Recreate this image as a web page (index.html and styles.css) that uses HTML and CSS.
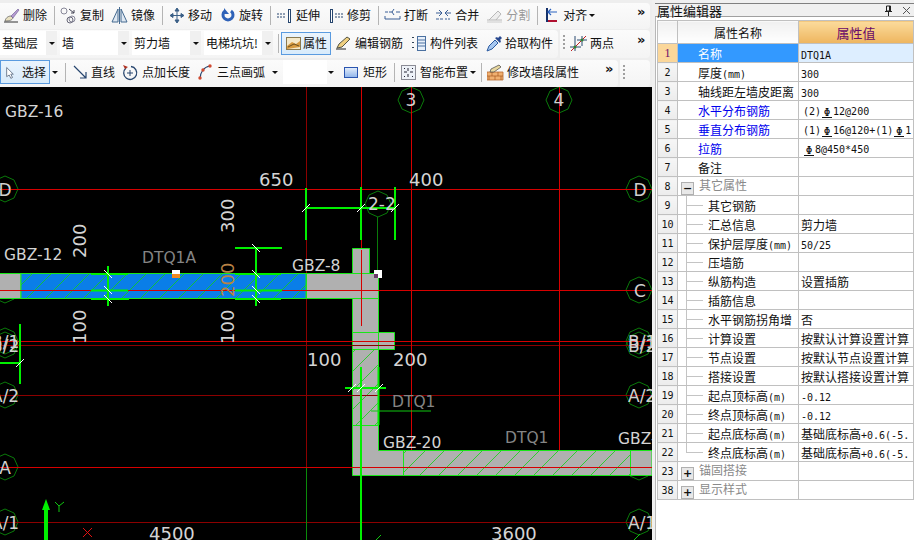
FILE: index.html
```html
<!DOCTYPE html>
<html lang="zh">
<head>
<meta charset="utf-8">
<title>属性编辑器</title>
<link rel="stylesheet" href="styles.css">
</head>
<body>
<div class="app">
  <div class="main">
    <div class="toolbars">
      <div class="bar row1">
        <span class="tool"><svg class="ic" viewBox="0 0 17 17"><path d="M1 15h14" stroke="#333" fill="none"/><path d="M2 14c1-4 4-5 6-5l2 2c-1 2-3 3-8 3z" fill="#e8e0c0" stroke="#555" stroke-width=".7"/><path d="M8 9l7-7 1 1-6 8z" fill="#b59ad0" stroke="#6a5a90" stroke-width=".6"/></svg><span>删除</span></span>
        <i class="sep"></i>
        <span class="tool"><svg class="ic" viewBox="0 0 17 17"><circle cx="4" cy="4" r="3" fill="none" stroke="#889"/><circle cx="10" cy="13" r="3" fill="none" stroke="#667"/><circle cx="12" cy="12" r="3" fill="none" stroke="#889"/><path d="M9 2l5 4M14 3v3h-3" fill="none" stroke="#445"/></svg><span>复制</span></span>
        <span class="tool"><svg class="ic" viewBox="0 0 17 17"><path d="M7 2L1 15h6zM10 2l6 13h-6z" fill="#dfe8f2" stroke="#456a90"/><path d="M8.500 0v17" stroke="#456a90"/></svg><span>镜像</span></span>
        <i class="sep"></i>
        <span class="tool"><svg class="ic" viewBox="0 0 17 17"><path d="M9 2v13M3 8.500h12M9 1l-2 3h4zM9 16l-2-3h4zM2 8.500l3-2v4zM16 8.500l-3-2v4z" stroke="#3a5f86" fill="#3a5f86"/></svg><span>移动</span></span>
        <span class="tool"><svg class="ic" viewBox="0 0 17 17"><path d="M6 4a5 5 0 1 0 6 0" fill="none" stroke="#2f62b8" stroke-width="3"/><path d="M5 1v6h5z" fill="#2f62b8"/></svg><span>旋转</span></span>
        <i class="sep"></i>
        <span class="tool"><svg class="ic" viewBox="0 0 17 17"><path d="M1 7h2m1 0h2m1 0h2M1 10h2m1 0h2m1 0h2" stroke="#26456e"/><rect x="12.500" y="2.500" width="2" height="13" fill="#fff" stroke="#26456e"/></svg><span>延伸</span></span>
        <span class="tool"><svg class="ic" viewBox="0 0 17 17"><rect x="3.500" y="2.500" width="2" height="13" fill="#fff" stroke="#26456e"/><path d="M8 7h2m1 0h2m1 0h2M8 10h2m1 0h2m1 0h2" stroke="#26456e"/></svg><span>修剪</span></span>
        <i class="sep"></i>
        <span class="tool"><svg class="ic" viewBox="0 0 17 17"><path d="M1 5h3m1 0h3m4 0h4M1 12h15" stroke="#3a5f96" fill="none"/><path d="M10 2l-2 3 2 3M1 9v3M16 9v3" stroke="#3a5f96" fill="none"/></svg><span>打断</span></span>
        <span class="tool"><svg class="ic" viewBox="0 0 17 17"><path d="M1 6h6m3 0h6M1 12h3m1 0h3m2 0h2m1 0h2" stroke="#3a5f96" fill="none"/><path d="M4 3l3 3-3 3M13 3l-3 3 3 3" stroke="#3a5f96" fill="none"/></svg><span>合并</span></span>
        <span class="tool off"><svg class="ic" viewBox="0 0 17 17"><path d="M1 13h15M3 13l9-9 3 3-5 6" fill="#eee" stroke="#b8b8b8"/><path d="M1 15h15" stroke="#ccc"/></svg><span>分割</span></span>
        <i class="sep"></i>
        <span class="tool"><svg class="ic" viewBox="0 0 17 17"><path d="M4 1v14" stroke="#14306a" stroke-width="2"/><path d="M5 5h9M8 2L5 5l3 3" stroke="#2a62c0" fill="none" stroke-width="1.200"/><path d="M5 14h9" stroke="#b01030" stroke-width="2"/></svg><span>对齐</span></span>
        <i class="caret near"></i>
        <b class="more">»</b>
      </div>
      <div class="row2">
        <div class="bar first">
          <span class="combo short"><span class="combo-text">基础层</span><i class="combo-btn"><i class="caret"></i></i></span>
          <span class="combo"><span class="combo-text">墙</span><i class="combo-btn"><i class="caret"></i></i></span>
          <span class="combo"><span class="combo-text">剪力墙</span><i class="combo-btn"><i class="caret"></i></i></span>
          <span class="combo"><span class="combo-text">电梯坑坑!</span><i class="combo-btn"><i class="caret"></i></i></span>
          <i class="sep tight"></i>
          <span class="tool active attr"><svg class="ic" viewBox="0 0 17 17"><rect x="1.500" y="2.500" width="14" height="12" fill="#f4e8c8" stroke="#8a7a50"/><path d="M2 11l5-4 4 2 4-3v6l-13 2z" fill="#d69a40"/><path d="M3 12l6-3 5 2" stroke="#6a5020" fill="none"/></svg><span>属性</span></span>
          <span class="tool"><svg class="ic" viewBox="0 0 17 17"><path d="M0 14h10" stroke="#222"/><path d="M1 13l2-4 8-7 3 2-8 8z" fill="#f0d080" stroke="#554"/></svg><span>编辑钢筋</span></span>
          <span class="tool"><svg class="ic" viewBox="0 0 17 17"><path d="M2 2v1M2 7v1M2 12v1" stroke="#345" stroke-width="2"/><rect x="6.500" y="1.500" width="8" height="14" fill="#e8f0fa" stroke="#4a70a0"/><path d="M7 5h7M7 8h7M7 11h7" stroke="#4a70a0"/></svg><span>构件列表</span></span>
          <span class="tool"><svg class="ic" viewBox="0 0 17 17"><path d="M1 16l2-5 6-6 3 3-6 6z" fill="#a8c8f0" stroke="#2a5aa0"/><path d="M9 3l5 5 1-2-1-1 2-2-2-2-2 2-1-1z" fill="#2a4a90"/></svg><span>拾取构件</span></span>
        </div>
        <div class="bar second">
          <i class="grip"></i>
          <span class="tool"><svg class="ic" viewBox="0 0 17 17"><path d="M1 16L16 1" stroke="#c02020"/><path d="M5 1v15M0 12h11M12 1v10M7 5h10" stroke="#2a4a70"/><circle cx="5" cy="12" r="1.500" fill="#308030"/><circle cx="12" cy="5" r="1.500" fill="#308030"/></svg><span>两点</span></span>
          <b class="more">»</b>
        </div>
      </div>
      <div class="row3">
        <div class="bar first">
          <span class="tool active select"><svg class="cursor" viewBox="0 0 12 14"><path d="M2 1v11l3-2 2 4 2-1-2-4h3z" fill="#fff" stroke="#5a6a80"/></svg><span>选择</span></span>
          <i class="caret near"></i>
          <i class="sep"></i>
          <span class="tool"><svg class="ic" viewBox="0 0 17 17"><path d="M3 2l12 12M15 8v6H9" fill="none" stroke="#26456e" stroke-width="1.200"/></svg><span>直线</span></span>
          <span class="tool"><svg class="ic" viewBox="0 0 17 17"><path d="M4 4a6.500 6.500 0 1 0 5-1.500" fill="none" stroke="#26456e" stroke-width="1.300"/><path d="M1 1l2 4 3-2" fill="#b03020"/><path d="M8 6v6M5 9h6" stroke="#26456e"/></svg><span>点加长度</span></span>
          <span class="tool"><svg class="ic" viewBox="0 0 17 17"><path d="M3 15C3 8 7 3 13 2" fill="none" stroke="#26456e" stroke-width="1.200"/><circle cx="3" cy="14" r="1.700" fill="#d04a30"/><circle cx="6" cy="6" r="1.700" fill="#d04a30"/><circle cx="13" cy="2" r="1.700" fill="#d04a30"/></svg><span>三点画弧</span></span>
          <i class="caret"></i>
          <span class="blank"></span>
          <i class="caret pull"></i>
          <span class="tool rect"><svg class="ic" viewBox="0 0 17 17"><defs><linearGradient id="rectfill" x1="0" y1="0" x2="0" y2="1"><stop offset="0" stop-color="#e6effb"/><stop offset="1" stop-color="#8fb4ea"/></linearGradient></defs><rect x="3.500" y="3.500" width="13" height="10" fill="url(#rectfill)" stroke="#2a55b0"/></svg><span>矩形</span></span>
          <i class="sep"></i>
          <span class="tool"><svg class="ic" viewBox="0 0 17 17"><rect x="1.500" y="1.500" width="14" height="14" fill="#eef2f8" stroke="#223" stroke-dasharray="1 1"/><path d="M8 4v3M8 10v3M4 8h3M10 8h3" stroke="#223"/><path d="M4 4h1v1H4zM12 4h1v1h-1zM4 12h1v1H4zM12 12h1v1h-1z" fill="#223"/></svg><span>智能布置</span></span>
          <i class="caret near"></i>
          <i class="sep pull"></i>
          <span class="tool"><svg class="ic" viewBox="0 0 17 17"><path d="M0 8h16v8H0z" fill="#f0b070" stroke="#b86a30" stroke-width=".8"/><path d="M0 12h16M5 8v4M11 8v4M2 12v4M8 12v4M14 12v4" stroke="#a85a20" stroke-width=".7"/><path d="M3 8l1-3 8-4 2 2-7 5z" fill="#e8d8a0" stroke="#444" stroke-width=".7"/></svg><span>修改墙段属性</span></span>
          <b class="more">»</b>
        </div>
        <div class="bar second"><i class="grip"></i></div>
      </div>
    </div>

    <svg class="canvas" viewBox="0 87 652 453" preserveAspectRatio="none">
      <defs>
        <pattern id="hatch" patternUnits="userSpaceOnUse" x="2" y="0" width="19" height="19">
          <path class="hatch" d="M-1 20L20 -1"/>
        </pattern>
      </defs>
      <rect class="bg" x="0" y="87" width="652" height="453"/>

      <g class="ring">
        <path d="M5 176l9 4 4 9-4 9-9 4-9-4-4-9 4-9z"/>
        <path d="M5 277l9 4 4 9-4 9-9 4-9-4-4-9 4-9z"/>
        <path d="M5 328l9 4 4 9-4 9-9 4-9-4-4-9 4-9z"/>
        <path d="M5 332l9 4 4 9-4 9-9 4-9-4-4-9 4-9z"/>
        <path d="M5 382l9 4 4 9-4 9-9 4-9-4-4-9 4-9z"/>
        <path d="M5 454l9 4 4 9-4 9-9 4-9-4-4-9 4-9z"/>
        <path d="M5 509l9 4 4 9-4 9-9 4-9-4-4-9 4-9z"/>
        <path d="M411 87l9 4 4 9-4 9-9 4-9-4-4-9 4-9z"/>
        <path d="M559 87l9 4 4 9-4 9-9 4-9-4-4-9 4-9z"/>
        <path d="M378 191l9 4 4 9-4 9-9 4-9-4-4-9 4-9z"/>
        <path d="M639 176l9 4 4 9-4 9-9 4-9-4-4-9 4-9z"/>
        <path d="M639 277l9 4 4 9-4 9-9 4-9-4-4-9 4-9z"/>
        <path d="M639 328l9 4 4 9-4 9-9 4-9-4-4-9 4-9z"/>
        <path d="M639 332l9 4 4 9-4 9-9 4-9-4-4-9 4-9z"/>
        <path d="M639 382l9 4 4 9-4 9-9 4-9-4-4-9 4-9z"/>
        <path d="M639 454l9 4 4 9-4 9-9 4-9-4-4-9 4-9z"/>
        <path d="M639 509l9 4 4 9-4 9-9 4-9-4-4-9 4-9z"/>
        <path d="M377.500 217V273"/>
      </g>

      <g class="grid-dark">
        <path d="M0 345.500H652M0 395.500H652M0 522.500H652"/>
        <path d="M306.500 87V467"/>
      </g>
      <g class="grid">
        <path d="M0 189.500H652M361.500 87V250M411.500 87V450M559.500 87V466"/>
      </g>
      <path class="grid-green" d="M306.500 467V540"/>

      <g class="wall">
        <path class="w-line" d="M0 273.500H21V298.500H0"/>
        <rect class="w-blue" x="21" y="273.500" width="285" height="25"/>
        <rect class="w-hatch" x="21" y="273.500" width="285" height="25"/>
        <path class="w-gray" d="M352.500 248.500H369.500V273.500H378.500V332.500H394.500V349.500H378.500V450.500H652V475.500H352.500V298.500H306.500V273.500H352.500Z"/>
        <rect class="w-hatch" x="352.500" y="349.500" width="26" height="76"/>
        <rect class="w-hatch" x="403.500" y="450.500" width="227" height="25"/>
        <path class="w-edge" d="M352.500 273.500H378.500M352.500 298.500H378.500M352.500 332.500H378.500M378.500 332.500V349.500M352.500 349.500H378.500M352.500 425.500H378.500M403.500 450.500V475.500M630.500 450.500V475.500"/>
      </g>

      <g class="grid">
        <path d="M0 290.500H652M361.500 250V326M0 341.500H652M0 467.500H652"/>
      </g>
      <path class="grid-dark" d="M352 345.500H395M352 395.500H379"/>

      <g class="dim">
        <path d="M108 266V306M91 274H128M91 290.500H128M91 299H129"/>
        <path d="M256 248V306M235 248H282M235 274H281M235 290.500H282M235 299H281"/>
        <path d="M306 188V240M361 187V240M395 187V240M306 208H395"/>
        <path d="M20 324V384M0 363H20"/>
        <path d="M361 367V540M378.500 367V425M345 388H386"/>
      </g>
      <path class="dim-thin" d="M371 411H431"/>
      <path class="axis-y" d="M46 540V508"/>
      <path class="axis-head" d="M46 499l4 11h-8z"/>
      <path class="axis-label" d="M55 502l4 4 5-4M59 506v6"/>
      <path class="axis-x" d="M83 528l9 9M92 528l-9 9"/>
      <path class="dim-thin" d="M634 540l6-6M376 540l5-5"/>

      <g class="tick">
        <path d="M104 270l8 8M104 286l8 8M104 295l8 8M252 244l8 8M252 270l8 8M252 286l8 8M252 295l8 8"/>
        <path d="M302 212l8-8M357 212l8-8M391 212l8-8M16 367l8-8M348 392l8-8M357 392l8-8M375 392l8-8"/>
      </g>

      <rect class="grip-w" x="172" y="270" width="8" height="4"/>
      <rect class="grip-o" x="172" y="274" width="8" height="4"/>
      <rect class="grip-w" x="374" y="270" width="8" height="8"/>
      <rect class="grip-p" x="374" y="274" width="4" height="4"/>

      <g class="label">
        <text x="5" y="117" class="sm">GBZ-16</text>
        <text x="4" y="260" class="sm">GBZ-12</text>
        <text x="292" y="271" class="sm">GBZ-8</text>
        <text x="383" y="448" class="sm">GBZ-20</text>
        <text x="618" y="444" class="sm">GBZ-22</text>
        <text x="259" y="186">650</text>
        <text x="409" y="186">400</text>
        <text x="307" y="366">100</text>
        <text x="393" y="366">200</text>
        <text x="149" y="540">4500</text>
        <text x="491" y="540">3600</text>
        <text x="86" y="258" transform="rotate(-90 86 258)">200</text>
        <text x="234" y="233" transform="rotate(-90 234 233)">300</text>
        <text x="86" y="344" transform="rotate(-90 86 344)">100</text>
        <text x="234" y="344" transform="rotate(-90 234 344)">100</text>
        <text x="234" y="297" transform="rotate(-90 234 297)" class="orange">200</text>
      </g>
      <g class="label dimmed">
        <text x="142" y="263">DTQ1A</text>
        <text x="392" y="407">DTQ1</text>
        <text x="505" y="443">DTQ1</text>
      </g>
      <g class="label axis">
        <text x="368" y="210">2-2</text>
        <text x="411" y="106" class="mid">3</text>
        <text x="559" y="106" class="mid">4</text>
        <text x="5" y="196" class="mid">D</text>
        <text x="640" y="196" class="mid">D</text>
        <text x="640" y="297" class="mid">C</text>
        <text x="5" y="474" class="mid">A</text>
        <text x="-9" y="348">B/1</text>
        <text x="-9" y="352">B/2</text>
        <text x="-9" y="402">A/2</text>
        <text x="-9" y="529">A/1</text>
        <text x="628" y="348">B/1</text>
        <text x="628" y="352">B/2</text>
        <text x="628" y="402">A/2</text>
        <text x="628" y="529">A/1</text>
      </g>
    </svg>
  </div>

  <aside class="panel">
    <div class="title"><span class="title-text">属性编辑器</span><span class="title-btns"><svg class="pin" viewBox="0 0 9 11"><path d="M2.500 1h4v5h-4zM1 6.500h7M4.500 7v4M5.500 1v5" stroke="#222" fill="none"/></svg><svg class="close" viewBox="0 0 9 9"><path d="M1 1l7 7M8 1l-7 7" stroke="#555" fill="none"/></svg></span></div>
    <table class="props">
      <colgroup><col class="c-num"><col class="c-name"><col class="c-val"></colgroup>
      <thead>
        <tr><th class="corner"></th><th class="h-name">属性名称</th><th class="h-val">属性值</th></tr>
      </thead>
      <tbody>
        <tr class="cur"><td class="num">1</td><td class="name">名称</td><td class="val"><span class="lat">DTQ1A</span></td></tr>
        <tr><td class="num">2</td><td class="name">厚度<span class="lat">(mm)</span></td><td class="val"><span class="lat">300</span></td></tr>
        <tr><td class="num">3</td><td class="name">轴线距左墙皮距离</td><td class="val"><span class="lat">300</span></td></tr>
        <tr><td class="num">4</td><td class="name link">水平分布钢筋</td><td class="val ind"><span class="lat">(2)<span class="bar-sym">Φ</span>12@200</span></td></tr>
        <tr><td class="num">5</td><td class="name link">垂直分布钢筋</td><td class="val ind"><span class="lat">(1)<span class="bar-sym">Φ</span>16@120+(1)<span class="bar-sym">Φ</span>1</span></td></tr>
        <tr><td class="num">6</td><td class="name link">拉筋</td><td class="val ind"><span class="lat"><span class="bar-sym">Φ</span>8@450*450</span></td></tr>
        <tr><td class="num">7</td><td class="name">备注</td><td class="val"></td></tr>
        <tr class="group"><td class="num">8</td><td class="name"><i class="box">−</i>其它属性</td><td class="val"></td></tr>
        <tr class="child"><td class="num">9</td><td class="name">其它钢筋</td><td class="val"></td></tr>
        <tr class="child"><td class="num">10</td><td class="name">汇总信息</td><td class="val">剪力墙</td></tr>
        <tr class="child"><td class="num">11</td><td class="name">保护层厚度<span class="lat">(mm)</span></td><td class="val"><span class="lat">50/25</span></td></tr>
        <tr class="child"><td class="num">12</td><td class="name">压墙筋</td><td class="val"></td></tr>
        <tr class="child"><td class="num">13</td><td class="name">纵筋构造</td><td class="val">设置插筋</td></tr>
        <tr class="child"><td class="num">14</td><td class="name">插筋信息</td><td class="val"></td></tr>
        <tr class="child"><td class="num">15</td><td class="name">水平钢筋拐角增</td><td class="val">否</td></tr>
        <tr class="child"><td class="num">16</td><td class="name">计算设置</td><td class="val">按默认计算设置计算</td></tr>
        <tr class="child"><td class="num">17</td><td class="name">节点设置</td><td class="val">按默认节点设置计算</td></tr>
        <tr class="child"><td class="num">18</td><td class="name">搭接设置</td><td class="val">按默认搭接设置计算</td></tr>
        <tr class="child"><td class="num">19</td><td class="name">起点顶标高<span class="lat">(m)</span></td><td class="val"><span class="lat">-0.12</span></td></tr>
        <tr class="child"><td class="num">20</td><td class="name">终点顶标高<span class="lat">(m)</span></td><td class="val"><span class="lat">-0.12</span></td></tr>
        <tr class="child"><td class="num">21</td><td class="name">起点底标高<span class="lat">(m)</span></td><td class="val">基础底标高<span class="lat">+0.6(-5.</span></td></tr>
        <tr class="child last"><td class="num">22</td><td class="name">终点底标高<span class="lat">(m)</span></td><td class="val">基础底标高<span class="lat">+0.6(-5.</span></td></tr>
        <tr class="group"><td class="num">23</td><td class="name"><i class="box">+</i>锚固搭接</td><td class="val"></td></tr>
        <tr class="group"><td class="num">38</td><td class="name"><i class="box">+</i>显示样式</td><td class="val"></td></tr>
      </tbody>
    </table>
  </aside>
</div>
</body>
</html>
```

FILE: styles.css
```css
* { box-sizing: border-box; }
html, body { margin: 0; padding: 0; }
body {
  width: 914px;
  height: 540px;
  overflow: hidden;
  background: #f0f0f0;
  font-family: "Noto Sans CJK SC", "Liberation Sans", sans-serif;
  font-size: 12px;
  color: #111;
}
.app { display: flex; width: 914px; height: 540px; }
.main { width: 652px; display: flex; flex-direction: column; }

/* toolbars */
.toolbars {
  height: 87px;
  padding: 3px 2px 0 0;
  display: flex;
  flex-direction: column;
  gap: 1px;
  background: #eeeeee;
}
.bar {
  display: flex;
  align-items: center;
  gap: 7px;
  background: linear-gradient(#fbfbfb, #f4f4f4);
  border-radius: 0 4px 4px 0;
  padding-bottom: 2px;
}
.row1 { height: 26px; padding-left: 3px; }
.row2, .row3 { display: flex; gap: 2px; }
.row2 { height: 28px; }
.row3 { height: 27px; margin-top: 1px; }
.first { flex: 1; min-width: 0; }
.row2 .first { gap: 3px; padding-right: 5px; }
.row3 .first { gap: 7px; padding-bottom: 3px; }
.row2 .second { width: 90px; gap: 4px; padding-left: 3px; }
.row3 .second { width: 30px; padding-left: 3px; }

.tool { display: flex; align-items: center; gap: 3px; white-space: nowrap; line-height: 16px; }
.tool.off { color: #9a9a9a; }
.ic { width: 17px; height: 17px; flex: none; display: block; }
.sep { width: 1px; height: 19px; background: #b4b4b4; margin-right: -2px; flex: none; }
.sep.tight { margin: 0 0 0 2px; }
.sep.pull { margin-left: -2px; }
.caret {
  width: 0;
  height: 0;
  flex: none;
  border-left: 3px solid transparent;
  border-right: 3px solid transparent;
  border-top: 3px solid #111;
}
.caret.near { margin-left: -5px; }
.caret.pull { margin-left: -6px; }
.more {
  margin-left: auto;
  margin-right: 1px;
  margin-top: -6px;
  font: bold 13px/12px "DejaVu Sans", sans-serif;
  color: #111;
  width: 12px;
}

/* combos row */
.combo { display: flex; width: 69px; height: 24px; align-items: stretch; }
.combo.short { width: 57px; }
.combo-text { flex: 1; background: #fff; padding-left: 2px; line-height: 24px; overflow: hidden; white-space: nowrap; }
.combo-btn { width: 11px; background: #f0f0f0; display: flex; align-items: center; justify-content: center; }
.active { border: 1px solid #5a9be0; background: linear-gradient(#eaf4fd, #d8ebfb); }
.attr { height: 23px; width: 50px; padding-left: 3px; gap: 1px; margin: 0 2px 0 -1px; flex: none; }
.row2 .first > .tool + .tool { gap: 2px; margin-left: 5px; }
.row2 .first > .attr + .tool { margin-left: 0; }
.grip { width: 2px; height: 16px; flex: none; background: repeating-linear-gradient(#a0a0a0 0 2px, transparent 2px 4px); margin-right: 1px; }

.select { width: 50px; height: 24px; padding-left: 4px; gap: 0; flex: none; }
.select span { margin-left: 7px; }
.cursor { width: 10px; height: 13px; display: block; }
.blank { width: 44px; height: 24px; background: #fff; margin-left: -2px; }
.rect span { margin-left: 2px; }

/* canvas */
.canvas { width: 652px; height: 453px; display: block; }
.bg { fill: #000; }
.ring path { fill: none; stroke: #0a7a0a; stroke-width: 1; stroke-dasharray: none; }
.grid path, .grid { stroke: #d60000; stroke-width: 1; fill: none; }
.grid-dark, .grid-dark path { stroke: #8c0000; stroke-width: 1; fill: none; }
.grid-green { stroke: #0a8a0a; fill: none; }
.w-blue { fill: #0a7ee8; }
.w-gray { fill: #b0b0b0; stroke: #19e619; stroke-width: 1; }
.w-line { fill: #b0b0b0; stroke: #19e619; }
.w-hatch { fill: url(#hatch); stroke: #19e619; stroke-width: 1; }
.hatch { stroke: #12d012; stroke-width: .8; fill: none; }
.w-edge { stroke: #19e619; fill: none; }
.dim { stroke: #00f000; stroke-width: 2; fill: none; }
.dim path { stroke: #00f000; fill: none; }
.dim-thin { stroke: #10c810; stroke-width: 1; fill: none; }
.axis-y { stroke: #00f000; stroke-width: 4; fill: none; }
.axis-head { fill: #00f000; }
.axis-label { stroke: #10c810; fill: none; }
.axis-x { stroke: #e01010; fill: none; }
.tick { stroke: #fff; stroke-width: 1; fill: none; }
.tick path { stroke: #fff; fill: none; }
.grip-w { fill: #fff; }
.grip-o { fill: #f08a20; }
.grip-p { fill: #6a3a6a; }
.label text { font-family: "DejaVu Sans", sans-serif; font-size: 18px; fill: #d4d4d4; }
.label text.sm { font-size: 15.500px; }
.label text.orange { fill: #b98245; }
.label.dimmed text { font-size: 15.500px; fill: #858585; }
.label.axis text { font-size: 17px; fill: #d0d0d0; }
.label.axis text.mid { text-anchor: middle; }

/* property panel */
.panel {
  width: 262px;
  padding: 3px 0 0 3px;
  background: linear-gradient(90deg, #b8b8b8 0 1px, #fff 1px) 3px 17px no-repeat;
  background-color: #f0f0f0;
  display: flex;
  flex-direction: column;
}
.title {
  height: 14px;
  flex: none;
  display: flex;
  align-items: center;
  justify-content: space-between;
  border-top: 1px solid #808080;
  border-bottom: 1px solid #a0a0a0;
  padding: 0 2px;
  font-size: 13px;
  line-height: 13px;
}
.title-text { white-space: nowrap; }
.title-btns { display: flex; align-items: center; gap: 9px; padding-right: 1px; }
.pin { width: 9px; height: 11px; display: block; }
.close { width: 9px; height: 9px; display: block; }
.props {
  table-layout: fixed;
  border-collapse: collapse;
  width: 257px;
  margin: 3px 0 0 2px;
  background: #fff;
  align-self: flex-start;
}
.c-num { width: 20px; }
.c-name { width: 121px; }
.props tr { height: 19px; }
.props thead tr { height: 23px; }
.props th, .props td {
  border: 1px solid #c0c0c0;
  padding: 0;
  font-weight: normal;
  overflow: hidden;
  white-space: nowrap;
  line-height: 15px;
  height: 19px;
}
.props thead th { height: 23px; }
.props th { text-align: center; }
.corner, .h-name { background: linear-gradient(#f0f0f0, #ffffff); }
.h-val { background: linear-gradient(#fbdb9c, #eeb55e); color: #6a0a6a; font-size: 13px; }
.num {
  background: linear-gradient(#f6f6f6, #ececec);
  text-align: center;
  font-family: "DejaVu Sans Mono", monospace;
  font-size: 10px;
}
.name { padding-left: 20px !important; }
.val { padding-left: 2px !important; }
.val.ind { padding-left: 4px !important; }
.lat { font-family: "DejaVu Sans Mono", monospace; font-size: 10px; line-height: 10px; }
.bar-sym {
  display: inline-block;
  width: 10px;
  height: 10px;
  margin: 0 1px;
  text-align: center;
  border-bottom: 1px solid #111;
  font-size: 11px;
  line-height: 9px;
  vertical-align: -1px;
}
.link { color: #0000ee; }
.cur .num { background: #fbd79a; color: #6a0a6a; font-family: "Liberation Serif", serif; font-size: 12px; }
.cur .name { background: #3399ff; color: #fff; }
.cur .val { background: #ddeeff; }
.group .name { color: #8a8a8a; padding-left: 3px !important; }
.box {
  display: inline-block;
  width: 13px;
  height: 13px;
  margin-right: 5px;
  vertical-align: -2px;
  border: 1px solid #b0b0b0;
  background: #e8e8e8;
  color: #111;
  font: bold 11px/11px "DejaVu Sans", sans-serif;
  text-align: center;
}
.child .name {
  padding-left: 30px !important;
  background:
    linear-gradient(#c4c4c4, #c4c4c4) 8px 0 / 1px 100% no-repeat,
    linear-gradient(#c4c4c4, #c4c4c4) 8px 9px / 17px 1px no-repeat;
}
.child.last .name {
  background:
    linear-gradient(#c4c4c4, #c4c4c4) 8px 0 / 1px 10px no-repeat,
    linear-gradient(#c4c4c4, #c4c4c4) 8px 9px / 17px 1px no-repeat;
}
```
